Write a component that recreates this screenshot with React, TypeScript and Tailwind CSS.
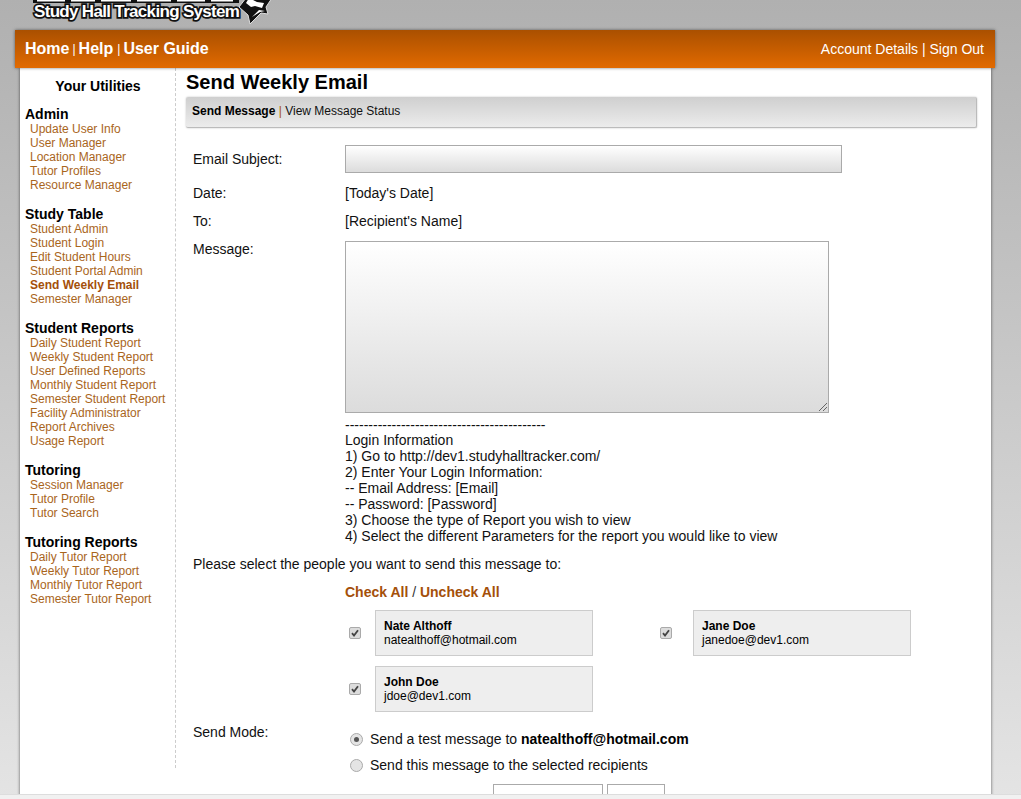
import React from 'react';

const sections = [
  { title: 'Admin', links: ['Update User Info', 'User Manager', 'Location Manager', 'Tutor Profiles', 'Resource Manager'] },
  { title: 'Study Table', links: ['Student Admin', 'Student Login', 'Edit Student Hours', 'Student Portal Admin', 'Send Weekly Email', 'Semester Manager'] },
  { title: 'Student Reports', links: ['Daily Student Report', 'Weekly Student Report', 'User Defined Reports', 'Monthly Student Report', 'Semester Student Report', 'Facility Administrator', 'Report Archives', 'Usage Report'] },
  { title: 'Tutoring', links: ['Session Manager', 'Tutor Profile', 'Tutor Search'] },
  { title: 'Tutoring Reports', links: ['Daily Tutor Report', 'Weekly Tutor Report', 'Monthly Tutor Report', 'Semester Tutor Report'] },
];

const Recipient: React.FC<{ name: string; email: string; wide?: boolean }> = ({ name, email, wide }) => (
  <div className="flex items-center">
    <div className={`flex items-center ${wide ? 'w-[37px] pl-[4px]' : 'w-[30px] pl-[4px]'}`}>
      <span className="w-[12px] h-[12px] rounded-[2px] border border-[#aaa] bg-[#dcdcdc] flex items-center justify-center">
        <svg width="10" height="10" viewBox="0 0 10 10"><path d="M2 5.2 L4 7.6 L8 2.2" fill="none" stroke="#444" strokeWidth="1.8" /></svg>
      </span>
    </div>
    <div className="w-[218px] h-[46px] border border-[#ccc] bg-[#eee] pl-[8px] pt-[8px] text-[12px] leading-[14px] text-black">
      <div className="font-bold">{name}</div>
      <div>{email}</div>
    </div>
  </div>
);

const App: React.FC = () => {
  return (
    <div className="h-[799px] overflow-hidden bg-gradient-to-b from-[#b0b0b0] to-[#e4e4e4] font-['Liberation_Sans',Arial,sans-serif] text-[14px] text-[#111] flex flex-col relative">
      <div className="h-[30px] shrink-0 pl-[34px] flex items-start overflow-hidden relative">
        <svg width="206" height="4" viewBox="0 0 206 4" className="absolute left-[33px] top-0">
          <rect x="0" y="-1" width="206" height="4" fill="#111" />
          <path d="M4 0h28v1.5h-28zM38 0h24v1.5h-24zM68 0h30v1.5h-30zM104 0h34v1.5h-34zM144 0h28v1.5h-28zM178 0h22v1.5h-22z" fill="#fff" />
        </svg>
        <span className="mt-[1px] font-bold text-[17px] leading-[22px] text-white tracking-[-0.68px] [-webkit-text-stroke:3.5px_#111] [paint-order:stroke_fill]">Study Hall Tracking System</span>
        <svg width="36" height="26" viewBox="0 0 36 26" className="absolute left-[237px] top-0">
          <path d="M2 7 L9 -2 L35 -2 L29 7 L31 14 L24 13 L13 24 L11 15 Z" fill="#111" stroke="#ddd" strokeWidth="1" />
          <path d="M9 3 L12 -2 L20 2 L27 3 L25 8 L18 6 L14 7 Z" fill="#fff" />
          <path d="M15 17 L22 10 L28 11 L23 12 Z" fill="#fff" />
        </svg>
      </div>

      <div className="ml-[15px] w-[980px] h-[38px] shrink-0 bg-gradient-to-b from-[#aa5000] to-[#e26a00] shadow-[0_0_3px_rgba(0,0,0,0.5)] relative z-10 flex items-center justify-between pl-[10px] pr-[11px] text-white">
        <div className="flex items-center font-bold text-[16px]">
          Home<span className="text-[12px] font-normal mx-[3px]">|</span>Help<span className="text-[12px] font-normal mx-[3px] pl-[1px]">|</span>User Guide
        </div>
        <div className="text-[14px]">Account Details | Sign Out</div>
      </div>

      <div className="ml-[20px] w-[971px] flex-1 bg-white shadow-[0_0_3px_rgba(0,0,0,0.6)] flex">
        <aside className="w-[156px] h-[700px] border-r border-dashed border-[#ccc] pl-[5px] pt-[10px] shrink-0">
          <div className="text-center font-bold text-[14px] leading-[16px] pr-[4px] text-black mb-[12px]">Your Utilities</div>
          {sections.map((s) => (
            <div key={s.title} className="mb-[14px]">
              <div className="font-bold text-[14px] leading-[16px] text-black">{s.title}</div>
              {s.links.map((l) => (
                <div key={l} className={`pl-[5px] text-[12px] leading-[14px] ${l === 'Send Weekly Email' ? 'font-bold text-[#a4500a]' : 'text-[#a9651c]'}`}>{l}</div>
              ))}
            </div>
          ))}
        </aside>

        <main className="flex-1 pl-[10px] pr-[14px]">
          <h1 className="font-bold text-[20px] leading-[23px] text-black pt-[3px]">Send Weekly Email</h1>
          <div className="mt-[3px] h-[31px] rounded-[2px] border-b border-r border-[#bbb] bg-gradient-to-b from-[#cfcfcf] to-[#ececec] shadow-[0_0_2px_rgba(0,0,0,0.25)] pl-[6px] pt-[6px] text-[12px] leading-[16px]">
            <b className="text-black">Send Message</b> <span className="text-[#a4500a]">|</span> View Message Status
          </div>

          <div className="pl-[7px] pt-[17px]">
            <div className="flex items-center h-[28px]">
              <div className="w-[152px]">Email Subject:</div>
              <div className="w-[497px] h-[28px] border border-[#aaa] bg-gradient-to-b from-white to-[#dcdcdc]" />
            </div>
            <div className="flex mt-[12px] leading-[16px]">
              <div className="w-[152px]">Date:</div>
              <div>[Today's Date]</div>
            </div>
            <div className="flex mt-[12px] leading-[16px]">
              <div className="w-[152px]">To:</div>
              <div>[Recipient's Name]</div>
            </div>
            <div className="flex mt-[12px]">
              <div className="w-[152px] leading-[16px]">Message:</div>
              <div className="leading-[16px]">
                <div className="relative w-[484px] h-[172px] border border-[#aaa] bg-gradient-to-b from-white to-[#dcdcdc]">
                  <svg width="10" height="10" viewBox="0 0 10 10" className="absolute right-0 bottom-0">
                    <path d="M1 9 L9 1 M5 9 L9 5" stroke="#666" strokeWidth="1" />
                  </svg>
                </div>
                <div className="mt-[4px] h-[15px]">-------------------------------------------</div>
                <div>Login Information</div>
                <div>1) Go to http://dev1.studyhalltracker.com/</div>
                <div>2) Enter Your Login Information:</div>
                <div>-- Email Address: [Email]</div>
                <div>-- Password: [Password]</div>
                <div>3) Choose the type of Report you wish to view</div>
                <div>4) Select the different Parameters for the report you would like to view</div>
              </div>
            </div>
            <div className="mt-[12px] leading-[16px]">Please select the people you want to send this message to:</div>
            <div className="ml-[152px] mt-[12px] leading-[16px] font-bold text-[#a4500a]">
              Check All <span className="font-normal text-[#333]">/</span> Uncheck All
            </div>
            <div className="ml-[152px] mt-[10px] grid grid-cols-[311px_255px] gap-y-[10px]">
              <Recipient name="Nate Althoff" email="natealthoff@hotmail.com" />
              <Recipient name="Jane Doe" email="janedoe@dev1.com" wide />
              <Recipient name="John Doe" email="jdoe@dev1.com" />
            </div>
            <div className="flex mt-[11px]">
              <div className="w-[152px] leading-[16px] pt-[1px]">Send Mode:</div>
              <div className="leading-[16px] pt-[8px]">
                <div className="flex items-center">
                  <span className="ml-[5px] w-[13px] h-[13px] rounded-full border border-[#aaa] bg-[#e4e4e4] flex items-center justify-center">
                    <span className="w-[5px] h-[5px] rounded-full bg-[#555]" />
                  </span>
                  <span className="ml-[7px]">Send a test message to <b className="text-black">natealthoff@hotmail.com</b></span>
                </div>
                <div className="flex items-center mt-[10px]">
                  <span className="ml-[5px] w-[13px] h-[13px] rounded-full border border-[#aaa] bg-[#e4e4e4]" />
                  <span className="ml-[7px]">Send this message to the selected recipients</span>
                </div>
                <div className="flex gap-[4px] ml-[148px] mt-[11px]">
                  <div className="w-[110px] h-[30px] border border-[#aaa] bg-white" />
                  <div className="w-[58px] h-[30px] border border-[#aaa] bg-white" />
                </div>
              </div>
            </div>
          </div>
        </main>
      </div>
      <div className="absolute left-0 right-0 bottom-0 h-[5px] bg-[#f1f1f1] border-t border-[#ddd]" />
    </div>
  );
};

export default App;
